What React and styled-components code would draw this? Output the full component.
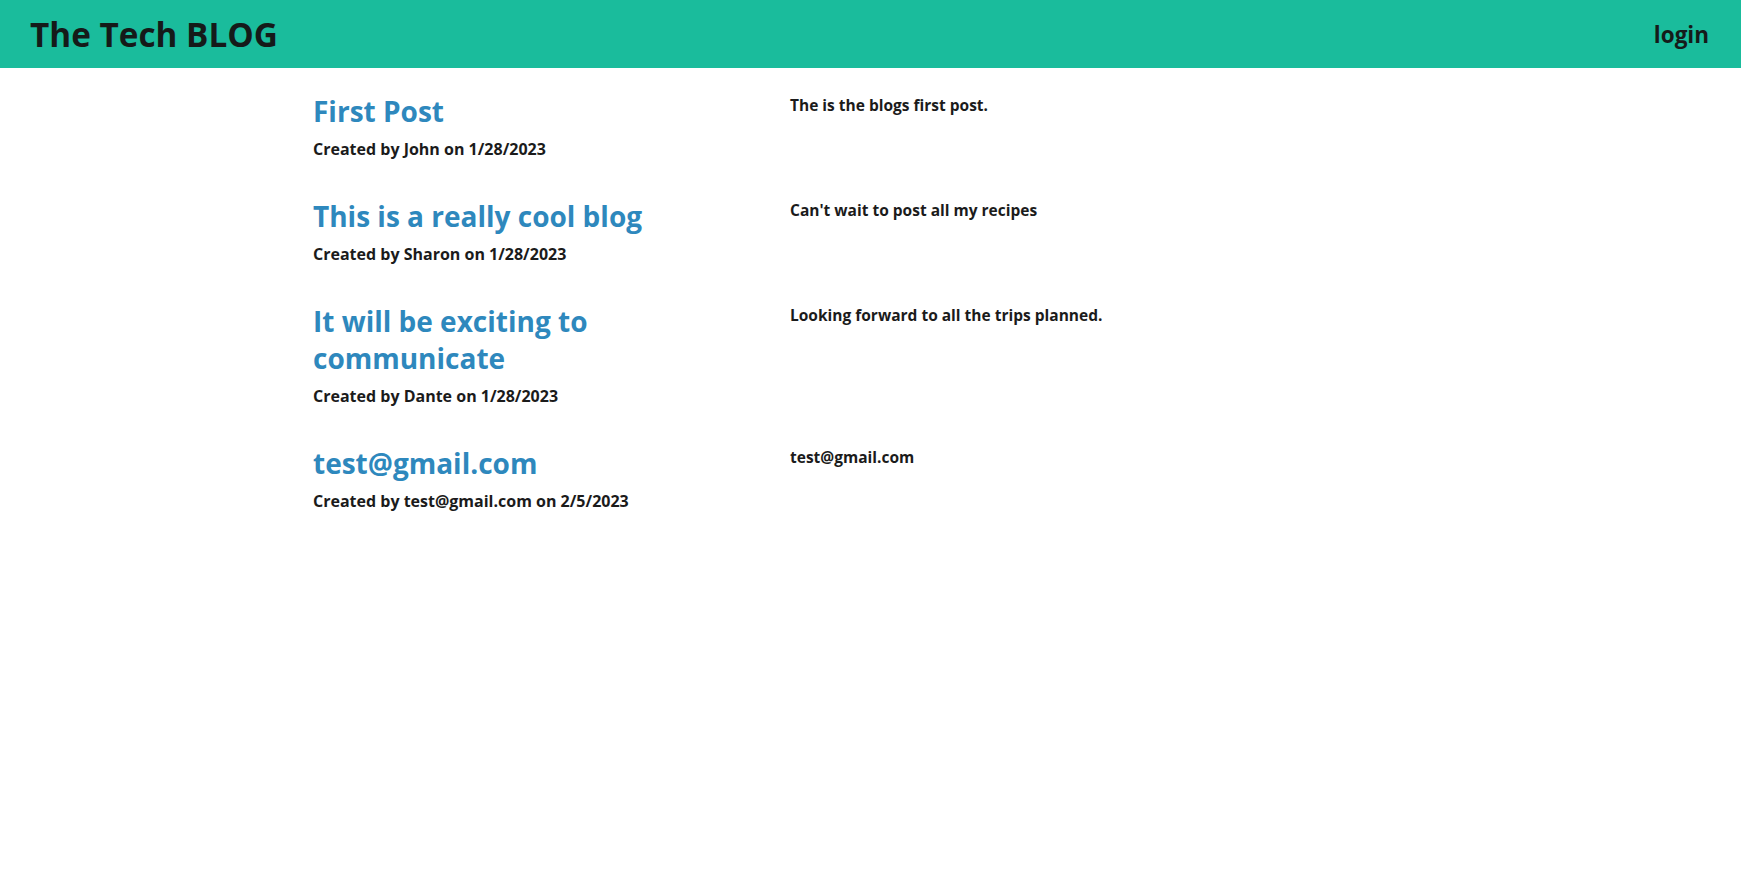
import styled, { createGlobalStyle } from 'styled-components';

const posts = [
  {
    title: 'First Post',
    author: 'John',
    date: '1/28/2023',
    body: 'The is the blogs first post.',
  },
  {
    title: 'This is a really cool blog',
    author: 'Sharon',
    date: '1/28/2023',
    body: "Can't wait to post all my recipes",
  },
  {
    title: 'It will be exciting to communicate',
    author: 'Dante',
    date: '1/28/2023',
    body: 'Looking forward to all the trips planned.',
  },
  {
    title: 'test@gmail.com',
    author: 'test@gmail.com',
    date: '2/5/2023',
    body: 'test@gmail.com',
  },
];

const App = () => {
  return (
    <>
      <GlobalStyle />
      <Header>
        <Brand>The Tech BLOG</Brand>
        <NavLink href="#">login</NavLink>
      </Header>
      <Main>
        {posts.map((post) => (
          <PostRow key={post.title}>
            <PostInfo>
              <PostTitle>{post.title}</PostTitle>
              <PostMeta>
                Created by {post.author} on {post.date}
              </PostMeta>
            </PostInfo>
            <PostBody>{post.body}</PostBody>
          </PostRow>
        ))}
      </Main>
    </>
  );
};

const GlobalStyle = createGlobalStyle`
  body {
    margin: 0;
    background: #fff;
    font-family: "Open Sans", "Noto Sans", sans-serif;
    color: #1b1b1b;
  }
`;

const Header = styled.header`
  height: 68px;
  background: #1abc9c;
  display: flex;
  justify-content: space-between;
  align-items: center;
  padding: 0 32px 0 30px;
  box-sizing: border-box;
`;

const Brand = styled.h1`
  margin: 0;
  font-size: 33.3px;
  font-weight: 700;
  color: #151a19;
`;

const NavLink = styled.a`
  font-size: 22.5px;
  font-weight: 700;
  color: #151a19;
  text-decoration: none;
`;

const Main = styled.main`
  padding: 25px 0 0 313px;
  display: flex;
  flex-direction: column;
  gap: 38px;
`;

const PostRow = styled.article`
  display: grid;
  grid-template-columns: 477px 1fr;
`;

const PostInfo = styled.div`
  display: flex;
  flex-direction: column;
  gap: 8px;
`;

const PostTitle = styled.h2`
  margin: 0;
  font-size: 28px;
  line-height: 37px;
  font-weight: 700;
  color: #2e88bd;
  max-width: 420px;
`;

const PostMeta = styled.p`
  margin: 0;
  font-size: 16px;
  font-weight: 700;
`;

const PostBody = styled.p`
  margin: 1px 0 0;
  font-size: 15.5px;
  font-weight: 700;
`;

export default App;
